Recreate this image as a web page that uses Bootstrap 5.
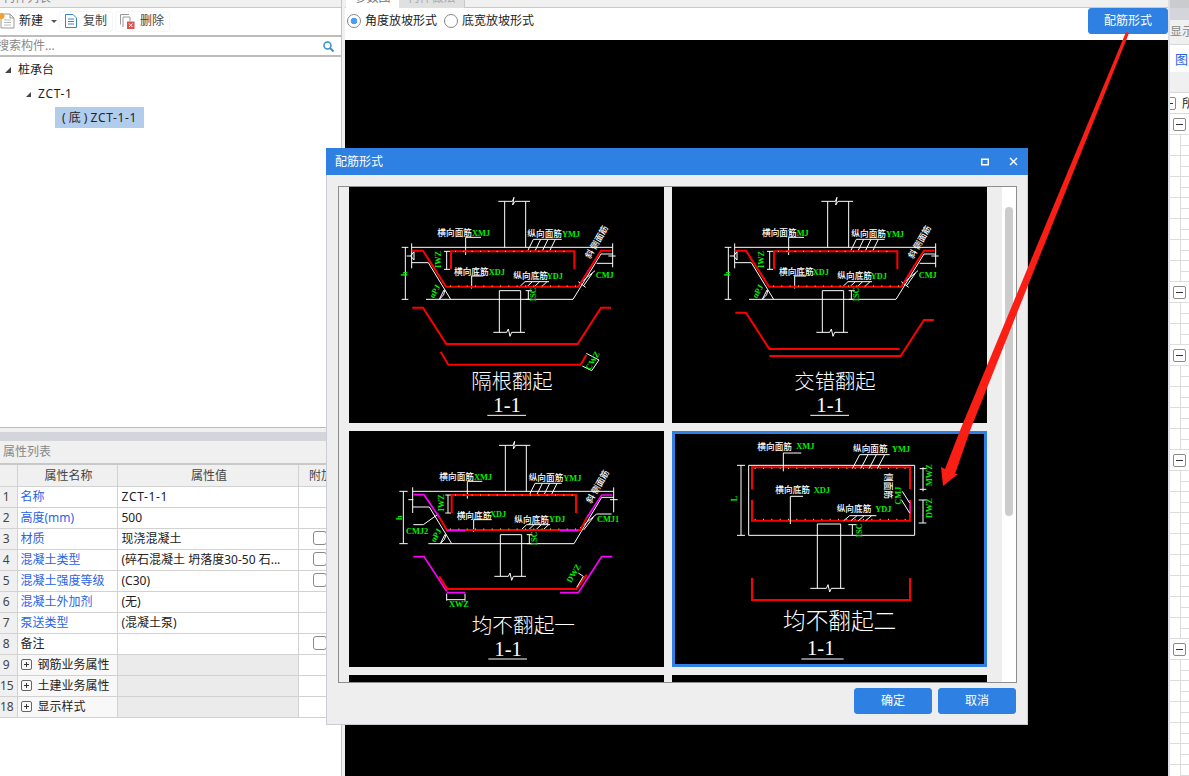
<!DOCTYPE html>
<html lang="zh">
<head>
<meta charset="utf-8">
<title>配筋形式</title>
<link href="https://cdn.jsdelivr.net/npm/bootstrap@5.3.0/dist/css/bootstrap.min.css" rel="stylesheet">
<style>
html,body{height:100%;margin:0;overflow:hidden}
body{font-family:"Noto Sans","Noto Sans CJK SC",sans-serif;font-size:12px;line-height:16px;color:#222;background:#f0f0f0;width:1189px;height:776px;position:relative}
.app-shell{width:1189px;height:776px}
.side-l{width:345px;height:776px;background:#f0f0f0}
.side-in{width:342px;height:776px;background:#fff;border-right:1px solid #c4c4c4;overflow:hidden}
.cut-strip{height:8px;background:#f0f0f0;border-bottom:1px solid #c8c8c8;overflow:hidden;color:#888}
.cut-strip span{display:block;margin:-10px 0 0 3px}
.tool-row{height:29px;padding:2px 0 3px 0;border-bottom:2px solid #bdbdbd;background:#fff}
.tool-it{height:21px;border:1px solid #f6f6f6;border-radius:3px;color:#444;padding:0 5px}
.tool-it svg{flex:none}
.search-row{height:20px;border-bottom:2px solid #bdbdbd;color:#888;overflow:hidden;padding-right:7px}
.search-row .ph{margin-left:-3px}
.tree-box{height:371px;padding-top:1px;border-bottom:1px solid #bdbdbd}
.tree-r{height:24px;color:#1c1c1c}
.tree-sel{height:21px;margin:1px 0 0 55px;width:89px;background:#b2cdec;padding-left:7px;white-space:nowrap;line-height:21px}
.tri{width:0;height:0;border-style:solid;border-width:0 0 6px 6px;border-color:transparent transparent #444 transparent;flex:none}
.wide-code{letter-spacing:.65px}
.split-gap{height:4px;background:#f0f0f0}
.split-bar{height:9px;background:#d4d5da}
.panel-tt{height:24px;background:#f0f0f0;color:#888;padding-left:3px;border-bottom:2px solid #c8c8c8;line-height:21px}
.prop-tbl.table{table-layout:fixed;width:341px;margin:0;border-collapse:collapse;--bs-table-border-color:#d2d2d2;--bs-table-bg:#fff;--bs-border-width:1px;font-size:12px;color:#222}
.prop-tbl.table td,.prop-tbl.table th{padding:0 0 0 3px;height:21px;line-height:19px;font-weight:400;white-space:nowrap;overflow:hidden;border:1px solid #d2d2d2;vertical-align:middle}
.prop-tbl.table tr>:first-child{border-left:0;--bs-table-bg:#f0f0f0;text-align:center;padding:0 4px 0 0;color:#444}
.prop-tbl.table th{--bs-table-bg:#f0f0f0;text-align:center;color:#444;border-top:0}
.prop-tbl.table .blue-k{color:#2a63e8}
.prop-tbl.table .grp-k{--bs-table-bg:#f8f8f8}
.prop-tbl.table .grp-v{--bs-table-bg:#ebebeb}
.prop-tbl.table .val-c{padding-left:4px}
.prop-tbl.table .chk-c{text-align:center;padding:0}
.prop-tbl .form-check-input{width:14px;height:14px;margin:2px 0 0;border:1px solid #8a8a8a;border-radius:3px}
.plus-box{display:inline-block;width:11px;height:11px;border:1px solid #666;border-radius:2px;position:relative;margin:0 6px 0 0;vertical-align:-1px}
.plus-box::before{content:"";position:absolute;left:2px;right:2px;top:4px;height:1px;background:#333}
.plus-box::after{content:"";position:absolute;top:2px;bottom:2px;left:4px;width:1px;background:#333}
.main-c{width:823px;height:776px}
.tab-strip{height:8px;background:#f0f0f0;border-bottom:1px solid #c8c8c8;padding-left:1px;box-sizing:border-box}
.tab-a,.tab-b{height:8px;overflow:hidden;color:#777;text-align:center}
.tab-a{width:53px;background:#fff}
.tab-b{width:66px;background:#e0e0e0;color:#aaa;border-right:1px solid #c8c8c8}
.tab-a span,.tab-b span{display:block;margin-top:-10px}
.radio-row{height:32px;background:#fff;padding:0 0 6px 2px;align-items:flex-start}
.radio-it{margin:5px 7px 0 0;height:16px;white-space:nowrap;color:#222}
.radio-it .form-check-input{width:14px;height:14px;margin:1px 4px 0 0;border:1px solid #888;background-image:none;background-color:#fff;float:none}
.radio-it .form-check-input:checked{background-color:#fff;background-image:radial-gradient(circle,#4d9df5 0 3px,#fff 3.6px)}
.act-btn{--bs-btn-bg:#2e81e2;--bs-btn-border-color:#2e81e2;--bs-btn-color:#fff;--bs-btn-padding-y:0;--bs-btn-padding-x:0;--bs-btn-font-size:12px;--bs-btn-border-radius:3px;--bs-btn-hover-bg:#2e81e2;--bs-btn-hover-border-color:#2e81e2;--bs-btn-hover-color:#fff;width:80px;height:26px;line-height:24px;flex:none}
.canvas-k{flex:1;background:#000}
.side-r{width:21px;height:776px;background:#fff;border-left:2px solid #dcdee6;overflow:hidden}
.r-top{height:8px;background:#c9cbce}
.r-split{height:12px;background:#d4d5da}
.r-tt{height:25px;background:#f0f0f0;color:#888;line-height:23px;white-space:nowrap;border-bottom:1px solid #d8d8d8;overflow:hidden}
.r-lnk{height:27px;color:#2a63e8;padding-left:5px;line-height:28px;white-space:nowrap;overflow:hidden;font-size:13px}
.r-hd{height:21px;background:#f0f0f0;border-bottom:1px solid #d8d8d8}
.r-root{height:21px;border-bottom:1px solid #d8d8d8;white-space:nowrap;overflow:hidden;padding-left:12px;line-height:21px;position:relative}
.r-root .mbox{position:absolute;left:-7px;top:4px}
.r-row{height:21px;border-bottom:1px solid #dcdcdc;position:relative}
.r-row.kid::before{content:"";position:absolute;left:10px;top:0;width:12px;height:11px;border-left:1px solid #dcdcdc;border-bottom:1px solid #dcdcdc}
.r-row.kid::after{content:"";position:absolute;left:10px;top:11px;height:10px;border-left:1px solid #dcdcdc}
.mbox{position:absolute;left:3px;top:4px;width:13px;height:13px;border:1px solid #8a8a8a;border-radius:2px;background:#fff}
.mbox::after{content:"";position:absolute;left:2px;right:2px;top:5px;height:1px;background:#333}
.dlg-win{position:absolute;left:326px;top:148px;width:702px;height:577px;background:#eee;border:1px solid #c9ccd4;border-top:0;box-sizing:border-box}
.dlg-head{height:27px;background:#2e81e2;color:#fff;margin:0 -1px;padding:0 10px 0 9px}
.dlg-body{position:absolute;left:11px;top:38px;width:679px;height:497px;background:#eee;border:1px solid #8e8e8e;overflow:hidden}
.pic-grid{display:grid;grid-template-columns:315px 315px;column-gap:8px;row-gap:8px;padding:0 0 0 10px;width:650px}
.pic-cell{width:315px;height:236px;background:#000;overflow:hidden}
.pic-cell svg{display:block}
.pic-on{border:3px solid #2e81e2;box-sizing:border-box}
.scroll-tr{position:absolute;right:0;top:0;bottom:0;width:14px;background:#fff}
.scroll-th{position:absolute;left:3px;top:20px;width:8px;height:309px;background:#ccc;border-radius:4px}
.dlg-foot{position:absolute;right:11px;top:540px;gap:6px}
.dlg-foot .act-btn{width:78px}
.arrow-over{position:absolute;left:0;top:0;pointer-events:none}
.cad-w{fill:#fff;font-family:"Noto Sans CJK SC",sans-serif;font-size:26px;font-weight:500}
.cad-g{fill:#00f000;font-family:"Liberation Serif",serif;font-size:25px;font-weight:700}
.cad-t{fill:#fff;font-family:"Noto Sans CJK SC",sans-serif;font-weight:300}
.cad-n{fill:#fff;font-family:"Liberation Serif",serif;font-size:62px}
.ln{fill:none;stroke:#fff;stroke-width:3}
.rd{fill:none;stroke:#f00;stroke-width:6}
.mg{fill:none;stroke:#f0f;stroke-width:5}
.yd{fill:none;stroke:#ff0;stroke-width:3;stroke-dasharray:3 22}
</style>
</head>
<body>
<div class="app-shell d-flex">

  <div class="side-l">
    <div class="side-in">
      <div class="cut-strip"><span>构件列表</span></div>
      <div class="tool-row d-flex align-items-center">
        <div class="d-flex align-items-center" style="width:59px">
          <svg width="15" height="16" viewBox="0 0 15 16" class="me-1"><path d="M1 1H10L14 5V15H1Z" fill="#fff" stroke="#999"/><path d="M10 1V5H14" fill="none" stroke="#999"/><path d="M4 7H11M4 9.500H11M4 12H11" stroke="#bbb"/><circle cx="1.500" cy="3" r="3" fill="#f0a030"/></svg>
          <span>新建</span>
          <span class="ms-2" style="border:3px solid transparent;border-top-color:#555;margin-top:3px"></span>
        </div>
        <div class="tool-it d-flex align-items-center" style="gap:6px">
          <svg width="12" height="14" viewBox="0 0 12 14"><path d="M.5.500H8L11.500 4V13.500H.5Z" fill="#fff" stroke="#3d85c6"/><path d="M3 5H9M3 7.500H9M3 10H9" stroke="#3d85c6"/></svg>
          <span>复制</span>
        </div>
        <div class="tool-it d-flex align-items-center" style="gap:5px;margin-left:2px;padding-left:4px">
          <svg width="15" height="15" viewBox="0 0 15 15"><path d="M.5 10.500V.5H9" fill="none" stroke="#999"/><path d="M3 13V3H10V7" fill="#fff" stroke="#999"/><rect x="7" y="7.500" width="7.500" height="7.500" fill="#d9534f"/><path d="M9 9.500L12.500 13M12.500 9.500L9 13" stroke="#fff"/></svg>
          <span>删除</span>
        </div>
      </div>
      <div class="search-row d-flex align-items-center justify-content-between">
        <span class="ph">搜索构件...</span>
        <svg width="11" height="11" viewBox="0 0 11 11"><circle cx="4.500" cy="4.500" r="3.500" fill="none" stroke="#3a8fc4" stroke-width="1.500"/><path d="M7 7L10.500 10.500" stroke="#3a8fc4" stroke-width="2"/></svg>
      </div>
      <div class="tree-box">
        <div class="tree-r d-flex align-items-center"><span class="tri" style="margin:0 7px 0 5px"></span><span>桩承台</span></div>
        <div class="tree-r d-flex align-items-center" style="padding-left:26px"><span class="tri" style="margin-right:7px;border-width:0 0 5px 5px"></span><span class="wide-code">ZCT-1</span></div>
        <div class="tree-sel">(&nbsp;底&nbsp;)&nbsp;<span class="wide-code">ZCT-1-1</span></div>
      </div>
      <div class="split-gap"></div>
      <div class="split-bar"></div>
      <div class="panel-tt">属性列表</div>
      <table class="table prop-tbl">
        <colgroup><col style="width:17px"><col style="width:100px"><col style="width:181px"><col style="width:43px"></colgroup>
        <tr><th></th><th>属性名称</th><th>属性值</th><th>附加</th></tr>
        <tr><td>1</td><td class="blue-k">名称</td><td class="val-c"><span class="wide-code">ZCT-1-1</span></td><td></td></tr>
        <tr><td>2</td><td class="blue-k">高度(mm)</td><td class="val-c">500</td><td></td></tr>
        <tr><td>3</td><td class="blue-k">材质</td><td class="val-c">现浇混凝土</td><td class="chk-c"><input class="form-check-input" type="checkbox" aria-label="附加"></td></tr>
        <tr><td>4</td><td class="blue-k">混凝土类型</td><td class="val-c">(碎石混凝土 坍落度30-50 石...</td><td class="chk-c"><input class="form-check-input" type="checkbox" aria-label="附加"></td></tr>
        <tr><td>5</td><td class="blue-k">混凝土强度等级</td><td class="val-c">(C30)</td><td class="chk-c"><input class="form-check-input" type="checkbox" aria-label="附加"></td></tr>
        <tr><td>6</td><td class="blue-k">混凝土外加剂</td><td class="val-c">(无)</td><td></td></tr>
        <tr><td>7</td><td class="blue-k">泵送类型</td><td class="val-c">(混凝土泵)</td><td></td></tr>
        <tr><td>8</td><td>备注</td><td></td><td class="chk-c"><input class="form-check-input" type="checkbox" aria-label="附加"></td></tr>
        <tr><td>9</td><td class="grp-k"><span class="plus-box"></span>钢筋业务属性</td><td class="grp-v"></td><td></td></tr>
        <tr><td>15</td><td class="grp-k"><span class="plus-box"></span>土建业务属性</td><td class="grp-v"></td><td></td></tr>
        <tr><td>18</td><td class="grp-k"><span class="plus-box"></span>显示样式</td><td class="grp-v"></td><td></td></tr>
      </table>
    </div>
  </div>

  <div class="main-c d-flex flex-column">
    <div class="tab-strip d-flex">
      <div class="tab-a"><span>参数图</span></div>
      <div class="tab-b"><span>构件做法</span></div>
    </div>
    <div class="d-flex" style="height:32px;background:#fff">
      <div class="radio-row d-flex flex-grow-1">
        <label class="radio-it d-flex"><input class="form-check-input" type="radio" name="fp" checked>角度放坡形式</label>
        <label class="radio-it d-flex"><input class="form-check-input" type="radio" name="fp">底宽放坡形式</label>
      </div>
      <button class="btn act-btn" type="button">配筋形式</button>
    </div>
    <div class="canvas-k"></div>
  </div>

  <div class="side-r">
    <div class="r-top"></div>
    <div class="r-split"></div>
    <div class="r-tt">显示样式</div>
    <div class="r-lnk">图元形状</div>
    <div class="r-hd"></div>
    <div class="r-root"><span class="mbox"></span>所有构件</div>
    <div class="r-row"><span class="mbox"></span></div>
    <div class="r-row kid"></div><div class="r-row kid"></div><div class="r-row kid"></div><div class="r-row kid"></div><div class="r-row kid"></div><div class="r-row kid"></div><div class="r-row kid"></div>
    <div class="r-row"><span class="mbox"></span></div>
    <div class="r-row kid"></div><div class="r-row kid"></div>
    <div class="r-row"><span class="mbox"></span></div>
    <div class="r-row kid"></div><div class="r-row kid"></div><div class="r-row kid"></div><div class="r-row kid"></div>
    <div class="r-row"><span class="mbox"></span></div>
    <div class="r-row kid"></div><div class="r-row kid"></div><div class="r-row kid"></div><div class="r-row kid"></div><div class="r-row kid"></div><div class="r-row kid"></div><div class="r-row kid"></div><div class="r-row kid"></div>
    <div class="r-row"><span class="mbox"></span></div>
    <div class="r-row kid"></div><div class="r-row kid"></div><div class="r-row kid"></div><div class="r-row kid"></div><div class="r-row kid"></div><div class="r-row kid"></div>
  </div>
</div>

<div class="dlg-win">
  <div class="dlg-head d-flex align-items-center justify-content-between">
    <span>配筋形式</span>
    <span class="d-flex align-items-center" style="gap:20px">
      <svg width="8" height="8" viewBox="0 0 8 8"><rect x=".75" y="1.250" width="6.500" height="5.500" fill="none" stroke="#fff" stroke-width="1.500"/></svg>
      <svg width="9" height="9" viewBox="0 0 9 9"><path d="M1 1L8 8M8 1L1 8" stroke="#fff" stroke-width="1.400"/></svg>
    </span>
  </div>
  <div class="dlg-body">
    <div class="pic-grid">
      <div class="pic-cell">
        <svg width="315" height="236" viewBox="12 21 945 708">
          <defs>
            <g id="cad-base">
              <path class="ln" d="M460,64H502L507,52L503,75L510,64H555M479,64V202M542,64V202"/>
              <path class="ln" d="M200,190V265M200,202H803M803,190V262M185,228H197L207,215V240L197,228M790,228H812M170,202H190M170,358H190M181,202V358"/>
              <path class="ln" d="M200,248H250L317,358M243,358H684L768,222H803M755,250H803"/>
              <path class="ln" d="M463,332H527V457M463,332V457M445,457H485L490,447L495,469L500,457H540"/>
              <path class="ln" d="M305,214V268M297,214H315M297,268H315M550,332V358M542,332H560M542,358H560"/>
              <path class="ln" d="M362,172H408M362,172V225M565,178H650M565,178L547,215M587,178L569,215M609,178L591,215M631,178L613,215"/>
              <path class="ln" d="M380,288H415M380,288V326M540,305H612M540,305L522,322M562,305L544,322M584,305L566,322M606,305L588,322"/>
              <path class="ln" d="M283,358L297,330M283,358Q300,345 300,330M702,312L750,272M715,318L742,280M700,305L722,322"/>
              <path class="rd" d="M200,212H234L303,320H700L768,212H800M318,268V214H688V268"/>
              <path class="yd" d="M330,214H680M315,318H695"/>
              <path fill="none" stroke="#f0f" stroke-width="2" stroke-dasharray="3 6" d="M710,303L735,262"/>
              <text class="cad-g" transform="translate(185,288) rotate(-90)">h</text>
              <text class="cad-g" transform="translate(289,264) rotate(-90)">IWZ</text>
              <text class="cad-g" transform="translate(572,364) rotate(-90)">ISC</text>
              <text class="cad-g" transform="translate(266,356) rotate(-60)">αPJ</text>
              <text class="cad-g" x="752" y="293">CMJ</text>
              <text class="cad-w" transform="translate(735,238) rotate(-60)">斜 侧面筋</text>
              <text class="cad-n" x="445" y="695">1-1</text>
              <path class="ln" d="M427,706H543"/>
            </g>
          </defs>
          <use href="#cad-base"/>
          <text class="cad-w" x="277" y="168">横向面筋</text><text class="cad-g" x="381" y="168">XMJ</text>
          <text class="cad-w" x="547" y="172">纵向面筋</text><text class="cad-g" x="651" y="172">YMJ</text>
          <text class="cad-w" x="327" y="286">横向底筋</text><text class="cad-g" x="431" y="285">XDJ</text>
          <text class="cad-w" x="505" y="297">纵向底筋</text><text class="cad-g" x="605" y="296">YDJ</text>
          <path class="rd" stroke-width="5" d="M202,383H234L304,492H698L768,383H798M287,515L310,554H707L724,524"/>
          <path class="ln" d="M724,520L762,540L740,572L712,558"/>
          <text class="cad-g" transform="translate(735,572) rotate(-60)">CWZ</text>
          <text class="cad-t" x="379" y="626" font-size="61">隔根翻起</text>
        </svg>
      </div>
      <div class="pic-cell">
        <svg width="315" height="236" viewBox="12 21 945 708">
          <use href="#cad-base"/>
          <text class="cad-w" x="282" y="168">横向面筋</text><text class="cad-g" x="386" y="168">MJ</text>
          <text class="cad-w" x="550" y="172">纵向面筋</text><text class="cad-g" x="654" y="172">YMJ</text>
          <text class="cad-w" x="333" y="286">横向底筋</text><text class="cad-g" x="434" y="285">XDJ</text>
          <text class="cad-w" x="508" y="297">纵向底筋</text><text class="cad-g" x="608" y="296">YDJ</text>
          <path class="rd" d="M202,398H234L304,507H695M304,528H698L768,420H798"/>
          <text class="cad-t" x="379" y="626" font-size="61">交错翻起</text>
        </svg>
      </div>
      <div class="pic-cell">
        <svg width="315" height="236" viewBox="12 9 945 708">
          <path class="ln" d="M462,52H504L509,40L505,63L512,52H556M481,52V190M544,52V190"/>
          <path class="ln" d="M203,178V255M203,190H806M806,178V253M190,215H205M795,215H818M163,190H188M163,347H188M175,190V347"/>
          <path class="ln" d="M203,237H253L320,347M250,347H687L770,208H806M205,290H235L280,258"/>
          <path class="ln" d="M466,320H530V445M466,320V445M448,445H490L495,435L500,457L505,445H543"/>
          <path class="ln" d="M309,201V255M301,201H318M301,255H318M553,320V347M545,320H562M545,347H562"/>
          <path class="ln" d="M367,160H412M367,160V212M570,166H650M570,166L552,203M592,166L574,203M614,166L596,203M636,166L618,203"/>
          <path class="ln" d="M386,275H440M386,275V312M545,290H615M545,290L527,307M567,290L549,307M589,290L571,307M611,290L593,307"/>
          <path class="ln" d="M286,347L300,319M286,347Q303,334 303,319M705,300L755,258H800M716,306L745,268"/>
          <path class="rd" d="M320,255V201H693V255M283,268L305,306H706L725,270"/>
          <path class="mg" d="M205,200H237L283,268M725,270L770,201H802M305,308H360M645,308H700"/>
          <path class="yd" d="M330,201H685M315,303H695"/>
          <path class="mg" d="M205,386H237L305,490M305,494H360M645,494H700L770,386H802"/>
          <path class="rd" stroke-width="4" d="M283,445L307,483H695L725,440"/>
          <path class="ln" d="M305,497V518M360,497V518M305,515H360M695,478L715,445L700,435"/>
          <text class="cad-g" transform="translate(172,276) rotate(-90)">h</text>
          <text class="cad-g" transform="translate(297,250) rotate(-90)">IWZ</text>
          <text class="cad-g" transform="translate(575,352) rotate(-90)">ISC</text>
          <text class="cad-g" transform="translate(270,344) rotate(-60)">αPJ</text>
          <text class="cad-g" x="756" y="281">CMJ1</text>
          <text class="cad-g" x="183" y="317">CMJ2</text>
          <text class="cad-g" x="312" y="536">XWZ</text>
          <text class="cad-g" transform="translate(678,466) rotate(-60)">DWZ</text>
          <text class="cad-w" transform="translate(738,228) rotate(-60)">斜 侧面筋</text>
          <text class="cad-w" x="283" y="156">横向面筋</text><text class="cad-g" x="387" y="156">XMJ</text>
          <text class="cad-w" x="551" y="160">纵向面筋</text><text class="cad-g" x="655" y="158">YMJ</text>
          <text class="cad-w" x="335" y="273">横向底筋</text><text class="cad-g" x="435" y="266">XDJ</text>
          <text class="cad-w" x="508" y="285">纵向底筋</text><text class="cad-g" x="612" y="282">YDJ</text>
          <text class="cad-t" x="380" y="614" font-size="62">均不翻起一</text>
          <text class="cad-n" x="448" y="683">1-1</text>
          <path class="ln" d="M430,693H546"/>
        </svg>
      </div>
      <div class="pic-cell pic-on">
        <svg width="309" height="230" viewBox="21 18 927 690">
          <path class="ln" d="M242,112H740V322H242Z"/>
          <path class="rd" d="M252,184V118H726V184M252,216V278H726V216"/>
          <path class="yd" d="M260,121H720M260,274H720"/>
          <path class="ln" d="M219,112V322M207,112H231M207,322H231"/>
          <path class="ln" d="M346,75H400M346,75V130M575,80H665M575,80L553,122M600,80L578,122M625,80L603,122M650,80L628,122"/>
          <path class="ln" d="M367,205H405M367,205V288M545,263H625M545,263L527,278M567,263L549,278M589,263L571,278M611,263L593,278"/>
          <path class="ln" d="M703,190L725,225M700,215L725,255"/>
          <path fill="none" stroke="#f0f" stroke-width="2" d="M727,218V258"/>
          <path class="ln" d="M765,118V190M755,122H775M755,184H775M765,216V285M752,216H775M752,285H775M553,290V322M541,290H565"/>
          <path class="ln" d="M448,288H518V481M448,288V481M427,481H475L480,470L485,492L490,481H530"/>
          <path class="rd" stroke-width="5" d="M252,450V516H726V450"/>
          <text class="cad-g" transform="translate(206,220) rotate(-90)">L</text>
          <text class="cad-g" transform="translate(791,174) rotate(-90)">MWZ</text>
          <text class="cad-g" transform="translate(791,270) rotate(-90)">DWZ</text>
          <text class="cad-g" transform="translate(582,328) rotate(-90)">ISC</text>
          <text class="cad-g" transform="translate(699,230) rotate(-90)">CMJ</text>
          <text class="cad-w" transform="translate(652,135) rotate(90)">侧面筋</text>
          <text class="cad-w" x="268" y="65">横向面筋</text><text class="cad-g" x="385" y="64">XMJ</text>
          <text class="cad-w" x="555" y="71">纵向面筋</text><text class="cad-g" x="672" y="72">YMJ</text>
          <text class="cad-w" x="322" y="196">横向底筋</text><text class="cad-g" x="437" y="196">XDJ</text>
          <text class="cad-w" x="506" y="253">纵向底筋</text><text class="cad-g" x="622" y="253">YDJ</text>
          <text class="cad-t" x="345" y="602" font-size="68">均不翻起二</text>
          <text class="cad-n" x="417" y="680">1-1</text>
          <path class="ln" d="M400,693H527"/>
        </svg>
      </div>
      <div class="pic-cell"></div>
      <div class="pic-cell"></div>
    </div>
    <div class="scroll-tr"><div class="scroll-th"></div></div>
  </div>
  <div class="dlg-foot d-flex">
    <button class="btn act-btn" type="button">确定</button>
    <button class="btn act-btn" type="button">取消</button>
  </div>
</div>

<svg class="arrow-over" width="1189" height="776" viewBox="0 0 1189 776" aria-hidden="true">
  <polygon points="1126,32 1129,33 971,428 955,474 958,474 943,486 941,467 945,469 961,428" fill="#fa1e14"/>
</svg>
</body>
</html>
